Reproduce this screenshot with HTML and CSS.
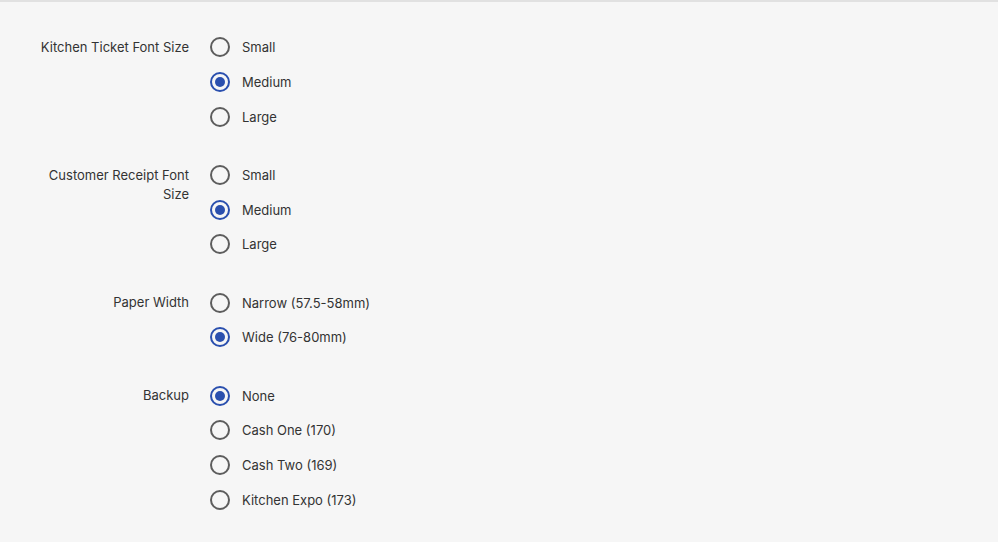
FILE: index.html
```html
<!DOCTYPE html>
<html>
<head>
<meta charset="utf-8">
<link rel="stylesheet" href="styles.css">
</head>
<body>
<div class="page">
  <div class="group">
    <div class="label">Kitchen Ticket Font Size</div>
    <div class="options">
      <label class="opt"><span class="radio"></span><span>Small</span></label>
      <label class="opt"><span class="radio on"></span><span>Medium</span></label>
      <label class="opt"><span class="radio"></span><span>Large</span></label>
    </div>
  </div>
  <div class="group">
    <div class="label">Customer Receipt Font<br>Size</div>
    <div class="options">
      <label class="opt"><span class="radio"></span><span>Small</span></label>
      <label class="opt"><span class="radio on"></span><span>Medium</span></label>
      <label class="opt"><span class="radio"></span><span>Large</span></label>
    </div>
  </div>
  <div class="group">
    <div class="label">Paper Width</div>
    <div class="options">
      <label class="opt"><span class="radio"></span><span>Narrow (57.5-58mm)</span></label>
      <label class="opt"><span class="radio on"></span><span>Wide (76-80mm)</span></label>
    </div>
  </div>
  <div class="group">
    <div class="label">Backup</div>
    <div class="options">
      <label class="opt"><span class="radio on"></span><span>None</span></label>
      <label class="opt"><span class="radio"></span><span>Cash One (170)</span></label>
      <label class="opt"><span class="radio"></span><span>Cash Two (169)</span></label>
      <label class="opt"><span class="radio"></span><span>Kitchen Expo (173)</span></label>
    </div>
  </div>
</div>
</body>
</html>
```
FILE: styles.css
```css
html, body {
  margin: 0;
  padding: 0;
  background: #f6f6f6;
}
body {
  font-family: "Inter", "Liberation Sans", sans-serif;
  font-size: 13px;
  color: #333;
  height: 542px;
  overflow: hidden;
}
.page {
  border-top: 2px solid #e1e1e1;
  padding-top: 28px;
  display: flex;
  flex-direction: column;
  gap: 23.7px;
}
.group {
  display: flex;
  align-items: flex-start;
}
.label {
  width: 189px;
  text-align: right;
  line-height: 19.5px;
  padding-top: 8px;
  flex-shrink: 0;
}
.options {
  margin-left: 21px;
  display: flex;
  flex-direction: column;
}
.opt {
  display: flex;
  align-items: center;
  height: 34.67px;
  gap: 12px;
}
.radio {
  box-sizing: border-box;
  width: 20px;
  height: 20px;
  border: 2px solid #5d5d5d;
  border-radius: 50%;
  display: flex;
  align-items: center;
  justify-content: center;
}
.radio.on {
  border-color: #2a4fae;
}
.radio.on::after {
  content: "";
  width: 10px;
  height: 10px;
  border-radius: 50%;
  background: #2a4fae;
}
```
